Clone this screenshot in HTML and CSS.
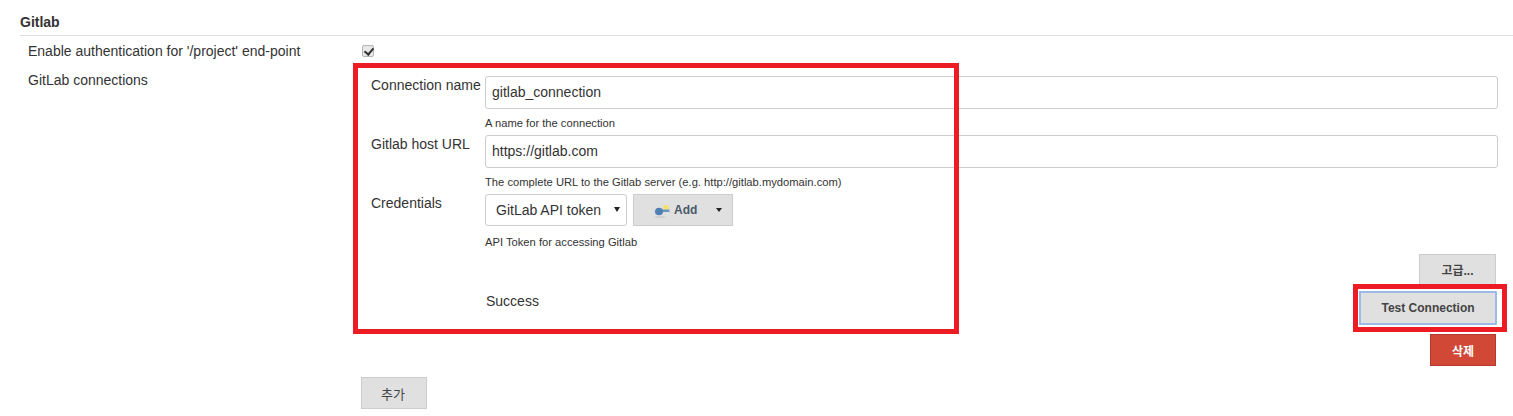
FILE: index.html
```html
<!DOCTYPE html>
<html lang="ko">
<head>
<meta charset="utf-8">
<title>Gitlab</title>
<link rel="stylesheet" href="styles.css">
</head>
<body>
<section class="section">
  <h2 class="section-title">Gitlab</h2>
  <div class="row row-auth">
    <div class="label">Enable authentication for '/project' end-point</div>
    <div class="value"><input class="check" type="checkbox" checked></div>
  </div>
  <div class="row row-conn">
    <div class="label">GitLab connections</div>
    <div class="value">
      <div class="conn">
        <div class="field">
          <div class="f-label">Connection name</div>
          <div class="f-main">
            <input class="text" type="text" value="gitlab_connection">
            <div class="help">A name for the connection</div>
          </div>
        </div>
        <div class="field">
          <div class="f-label">Gitlab host URL</div>
          <div class="f-main">
            <input class="text" type="text" value="https://gitlab.com">
            <div class="help">The complete URL to the Gitlab server (e.g. http://gitlab.mydomain.com)</div>
          </div>
        </div>
        <div class="field">
          <div class="f-label f-label-cred">Credentials</div>
          <div class="f-main">
            <div class="cred">
              <div class="select">GitLab API token<span class="sel-arrow"></span></div>
              <button class="btn btn-add" type="button">
                <svg class="key" width="18" height="16" viewBox="0 0 18 16" aria-hidden="true">
                  <ellipse cx="6" cy="15" rx="6" ry="1" fill="#cfcfcf"/>
                  <circle cx="12" cy="5.500" r="2.800" fill="#f3e26a"/>
                  <path d="M6 7.500h9.500v2.500h-9.500z" fill="#6a96c4"/>
                  <ellipse cx="5" cy="9.500" rx="4" ry="3.800" fill="#4f7fb4"/>
                </svg>
                <span class="add-text">Add</span>
                <span class="caret"></span>
              </button>
            </div>
            <div class="help help-cred">API Token for accessing Gitlab</div>
          </div>
        </div>
        <div class="advanced"><button class="btn btn-adv" type="button">고급...</button></div>
        <div class="test">
          <div class="success">Success</div>
          <button class="btn btn-test" type="button">Test Connection</button>
        </div>
        <div class="delete"><button class="btn btn-del" type="button">삭제</button></div>
      </div>
      <button class="btn btn-plus" type="button">추가</button>
    </div>
  </div>
</section>
<div class="mark mark-a"></div>
<div class="mark mark-b"></div>
</body>
</html>
```
FILE: styles.css
```css
* { box-sizing: border-box; }
html, body { margin: 0; padding: 0; }
body {
  position: relative;
  height: 416px;
  overflow: hidden;
  background: #fff;
  color: #333;
  font-family: "Liberation Sans", "Noto Sans CJK KR", sans-serif;
  font-size: 14px;
}
.section { padding: 15px 0 0 20px; }
.section-title {
  margin: 0;
  height: 21px;
  border-bottom: 1px solid #e0e0e0;
  font-size: 14px;
  line-height: 15px;
  font-weight: bold;
}
.row { display: grid; grid-template-columns: 341px 1fr; }
.row-auth { height: 29px; padding-top: 7px; }
.row-conn { padding-top: 0; }
.label { padding-left: 8px; line-height: 16px; }
.row-conn .label { padding-top: 7px; }
.check {
  appearance: none;
  position: relative;
  display: block;
  width: 12px;
  height: 12px;
  margin: 2px 0 0 1px;
  border: 1px solid #b5b5b5;
  border-radius: 2px;
  background: #e8e8e8;
}
.check::after {
  content: "";
  position: absolute;
  left: 3px;
  top: 0;
  width: 4px;
  height: 7px;
  border: solid #333;
  border-width: 0 2px 2px 0;
  transform: rotate(40deg);
}
.conn { padding: 11px 15px 0 10px; }
.field { display: grid; grid-template-columns: 114px 1fr; }
.f-label { padding-top: 1px; line-height: 16px; white-space: nowrap; }
.f-label-cred { padding-top: 1px; }
.text {
  display: block;
  width: 100%;
  height: 33px;
  padding: 0 6px 2px;
  border: 1px solid #ccc;
  border-radius: 3px;
  background: #fff;
  color: #333;
  font: 14px "Liberation Sans", sans-serif;
}
.help { height: 26px; padding-top: 8px; font-size: 11.200px; line-height: 12px; color: #333; }
.cred { display: flex; gap: 6px; height: 32px; }
.select {
  position: relative;
  width: 142px;
  height: 32px;
  padding-left: 10px;
  border: 1px solid #ccc;
  border-radius: 3px;
  line-height: 30px;
  white-space: nowrap;
}
.sel-arrow {
  position: absolute;
  right: 6px;
  top: 12px;
  border: 3.500px solid transparent;
  border-top: 5px solid #222;
  border-bottom: 0;
}
.btn {
  display: inline-flex;
  align-items: center;
  justify-content: center;
  border: 1px solid #ccc;
  background: #e0e0e0;
  color: #444;
  font: bold 12px "Liberation Sans", "Noto Sans CJK KR", sans-serif;
  padding: 0;
}
.btn-add { width: 100px; height: 32px; justify-content: flex-start; padding-left: 20px; }
.key { margin-right: 2px; }
.add-text { font-size: 12px; color: #4a5a6a; }
.caret {
  margin-left: 19px;
  border: 3.500px solid transparent;
  border-top: 4px solid #222;
  border-bottom: 0;
}
.help-cred { height: 28px; padding-top: 10px; }
.advanced { display: flex; justify-content: flex-end; height: 37px; padding-right: 2px; }
.btn-adv { width: 77px; height: 31px; }
.test { display: flex; justify-content: space-between; height: 43px; padding-right: 1px; }
.success { padding: 2px 0 0 115px; line-height: 16px; }
.btn-test {
  width: 138px;
  height: 34px;
  border: 2px solid #9dbbe6;
  border-radius: 1px;
}
.delete { display: flex; justify-content: flex-end; height: 43px; padding-right: 2px; }
.btn-del { width: 66px; height: 32px; border-color: #b53a2e; background: #d14836; color: #fff; }
.btn-plus { display: flex; width: 66px; height: 32px; padding-right: 2px; font-weight: normal; font-size: 13px; }
.mark { position: absolute; border: 5px solid #ed1c24; }
.mark-a { left: 353px; top: 63px; width: 606px; height: 271px; }
.mark-b { left: 1353px; top: 284px; width: 154px; height: 48px; }
```
